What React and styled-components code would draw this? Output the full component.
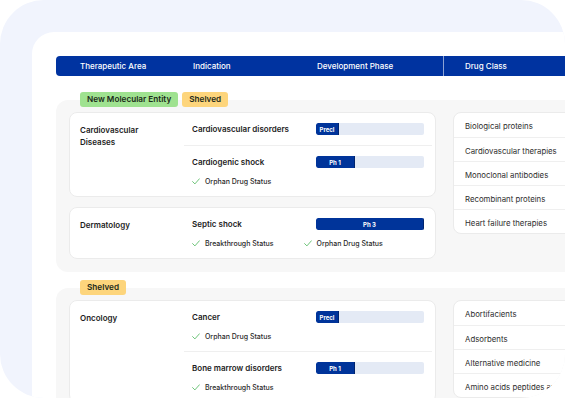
import styled, { createGlobalStyle } from "styled-components";

const GlobalStyle = createGlobalStyle`
  html, body {
    margin: 0;
    padding: 0;
    background: #ffffff;
    font-family: Inter, "Noto Sans", sans-serif;
    -webkit-font-smoothing: antialiased;
  }
`;

const Frame = styled.div`
  width: 565px;
  height: 398px;
  border-radius: 44px;
  background: #f1f4fd;
  overflow: hidden;
  padding: 32px 0 0 32px;
  box-sizing: border-box;
`;

const Sheet = styled.div`
  width: 600px;
  height: 420px;
  background: #ffffff;
  border-radius: 22px 0 0 0;
  padding: 24px 0 0 24px;
  box-sizing: border-box;
`;

const HeaderBar = styled.div`
  display: flex;
  align-items: center;
  width: 560px;
  height: 20px;
  background: #0033a0;
  border-radius: 4px 0 0 4px;
  padding-left: 24px;
  box-sizing: border-box;
  color: #ffffff;
  font-size: 8px;
  font-weight: 500;
`;

const HeadCell = styled.div`
  width: ${(p) => p.$w}px;
  flex-shrink: 0;
  height: 100%;
  display: flex;
  align-items: center;
  ${(p) =>
    p.$divider &&
    `border-left: 1px solid rgba(255,255,255,0.55); padding-left: 21px;`}
`;

const Group = styled.div`
  margin-top: ${(p) => p.$top}px;
`;

const Tags = styled.div`
  display: flex;
  gap: 4px;
  padding-left: 24px;
  margin-bottom: -7px;
  position: relative;
  z-index: 1;
`;

const Tag = styled.span`
  height: 15px;
  line-height: 15px;
  padding: 0 7px;
  border-radius: 3px;
  font-size: 8.2px;
  font-weight: 600;
  color: #1c2a1a;
  background: ${(p) => (p.$kind === "nme" ? "#9fe290" : "#fdd57c")};
`;

const Panel = styled.div`
  display: flex;
  align-items: flex-start;
  gap: 17px;
  width: 560px;
  background: #f7f7f7;
  border-radius: 12px 0 0 12px;
  padding: 12px 0 13px 13px;
  box-sizing: border-box;
`;

const Cards = styled.div`
  display: flex;
  flex-direction: column;
  gap: 10px;
  width: 367px;
  flex-shrink: 0;
`;

const Card = styled.div`
  display: flex;
  background: #ffffff;
  border: 1px solid #ebebeb;
  border-radius: 8px;
`;

const Area = styled.div`
  width: 114px;
  flex-shrink: 0;
  padding: 11px 20px 0 10px;
  box-sizing: border-box;
  font-size: 8px;
  font-weight: 600;
  line-height: 12px;
  color: #1d1d1d;
`;

const Indications = styled.div`
  flex: 1;
  margin-right: 3px;
`;

const Row = styled.div`
  padding: 10px 8px;
  & + & {
    border-top: 1px solid #efefef;
  }
`;

const RowTop = styled.div`
  display: flex;
  align-items: center;
  height: 12px;
`;

const Name = styled.div`
  width: 124px;
  flex-shrink: 0;
  font-size: 8px;
  font-weight: 600;
  color: #1d1d1d;
`;

const Bar = styled.div`
  width: 108px;
  height: 12px;
  background: #e4eaf5;
  border-radius: 2px;
  overflow: hidden;
  display: flex;
`;

const Fill = styled.div`
  background: #00349a;
  border-right: 1px solid #00246e;
  border-radius: 2px 0 0 2px;
  display: flex;
  align-items: center;
  justify-content: center;
  color: #ffffff;
  font-size: 6px;
  font-weight: 700;
  box-sizing: border-box;
`;

const Statuses = styled.div`
  display: flex;
  gap: 30px;
  margin-top: 8px;
  height: 10px;
`;

const Status = styled.div`
  display: flex;
  align-items: center;
  gap: 5px;
  font-size: 7px;
  font-weight: 500;
  color: #2a2a2a;
`;

const DrugCard = styled.div`
  width: 160px;
  flex-shrink: 0;
  background: #ffffff;
  border: 1px solid #ebebeb;
  border-radius: 8px 0 0 8px;
`;

const Drug = styled.div`
  height: 24px;
  box-sizing: border-box;
  padding: 2px 0 0 11px;
  display: flex;
  align-items: center;
  font-size: 7.8px;
  color: #2e2e2e;
  white-space: nowrap;
  & + & {
    border-top: 1px solid #efefef;
  }
`;

const phases = {
  Precl: 23,
  "Ph 1": 39,
  "Ph 3": 108,
};

function Check() {
  return (
    <svg width="8" height="7" viewBox="0 0 8 7">
      <path
        d="M0.6 3.6 L2.9 5.9 L7.4 0.8"
        fill="none"
        stroke="#5dbd6a"
        strokeWidth="0.9"
        strokeLinecap="round"
        strokeLinejoin="round"
      />
    </svg>
  );
}

function Indication({ name, phase, statuses }) {
  return (
    <Row>
      <RowTop>
        <Name>{name}</Name>
        <Bar>
          <Fill style={{ width: phases[phase] }}>{phase}</Fill>
        </Bar>
      </RowTop>
      {statuses && (
        <Statuses>
          {statuses.map((s) => (
            <Status key={s}>
              <Check />
              {s}
            </Status>
          ))}
        </Statuses>
      )}
    </Row>
  );
}

const groups = [
  {
    tags: ["nme", "shelved"],
    top: 16,
    areas: [
      {
        area: "Cardiovascular Diseases",
        items: [
          { name: "Cardiovascular disorders", phase: "Precl" },
          {
            name: "Cardiogenic shock",
            phase: "Ph 1",
            statuses: ["Orphan Drug Status"],
          },
        ],
      },
      {
        area: "Dermatology",
        items: [
          {
            name: "Septic shock",
            phase: "Ph 3",
            statuses: ["Breakthrough Status", "Orphan Drug Status"],
          },
        ],
      },
    ],
    drugs: [
      "Biological proteins",
      "Cardiovascular therapies",
      "Monoclonal antibodies",
      "Recombinant proteins",
      "Heart failure therapies",
    ],
  },
  {
    tags: ["shelved"],
    top: 8,
    areas: [
      {
        area: "Oncology",
        items: [
          {
            name: "Cancer",
            phase: "Precl",
            statuses: ["Orphan Drug Status"],
          },
          {
            name: "Bone marrow disorders",
            phase: "Ph 1",
            statuses: ["Breakthrough Status"],
          },
        ],
      },
    ],
    drugs: [
      "Abortifacients",
      "Adsorbents",
      "Alternative medicine",
      "Amino acids peptides and proteins",
    ],
  },
];

const tagLabels = { nme: "New Molecular Entity", shelved: "Shelved" };

export default function App() {
  return (
    <>
      <GlobalStyle />
      <Frame>
        <Sheet>
          <HeaderBar>
            <HeadCell $w={113}>Therapeutic Area</HeadCell>
            <HeadCell $w={124}>Indication</HeadCell>
            <HeadCell $w={126}>Development Phase</HeadCell>
            <HeadCell $w={150} $divider>
              Drug Class
            </HeadCell>
          </HeaderBar>
          {groups.map((g, i) => (
            <Group key={i} $top={g.top}>
              <Tags>
                {g.tags.map((t) => (
                  <Tag key={t} $kind={t}>
                    {tagLabels[t]}
                  </Tag>
                ))}
              </Tags>
              <Panel>
                <Cards>
                  {g.areas.map((a) => (
                    <Card key={a.area}>
                      <Area>{a.area}</Area>
                      <Indications>
                        {a.items.map((it) => (
                          <Indication key={it.name} {...it} />
                        ))}
                      </Indications>
                    </Card>
                  ))}
                </Cards>
                <DrugCard>
                  {g.drugs.map((d) => (
                    <Drug key={d}>{d}</Drug>
                  ))}
                </DrugCard>
              </Panel>
            </Group>
          ))}
        </Sheet>
      </Frame>
    </>
  );
}
